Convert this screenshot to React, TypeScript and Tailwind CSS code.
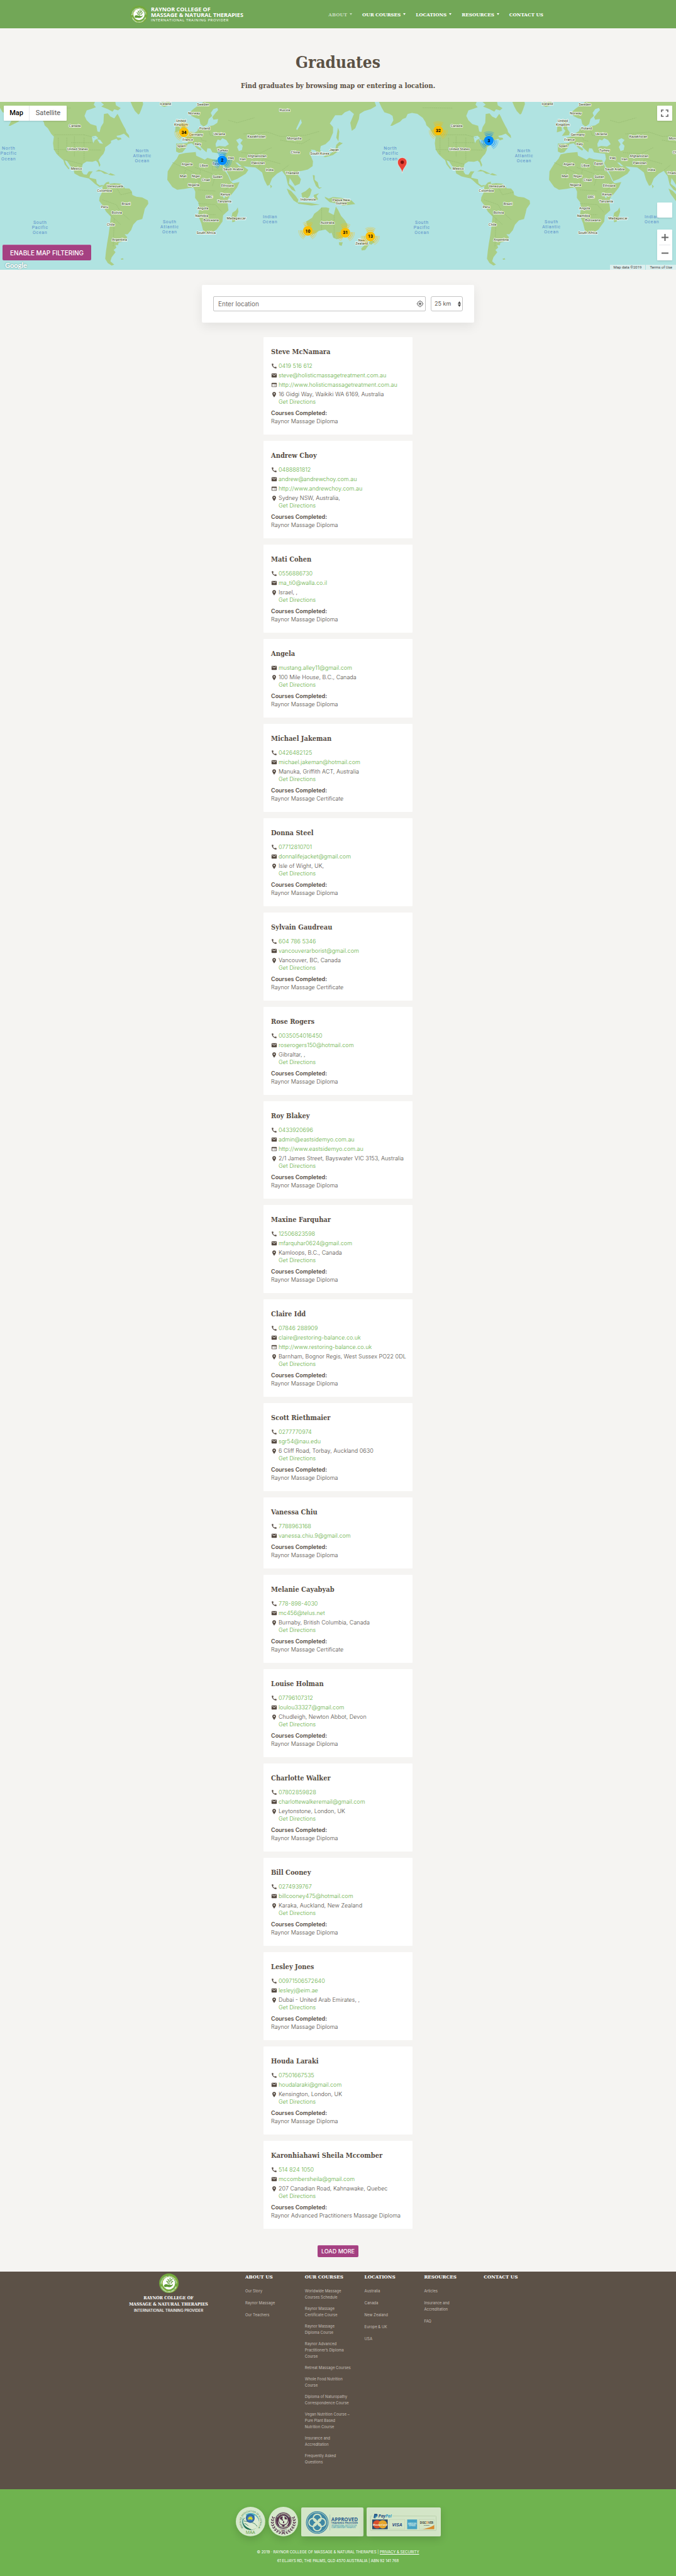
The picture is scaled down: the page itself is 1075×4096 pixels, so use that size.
import React from "react";
import { MdCall, MdEmail, MdWeb, MdLocationOn, MdMyLocation, MdFullscreen } from "react-icons/md";

type Graduate = {
  name: string;
  phone?: string;
  email: string;
  site?: string;
  address?: string;
  course?: string;
};

const graduates: Graduate[] = [
  { name: "Steve McNamara", phone: "0419 516 612", email: "steve@holisticmassagetreatment.com.au", site: "http://www.holisticmassagetreatment.com.au", address: "16 Gidgi Way, Waikiki WA 6169, Australia" },
  { name: "Andrew Choy", phone: "0488881812", email: "andrew@andrewchoy.com.au", site: "http://www.andrewchoy.com.au", address: "Sydney NSW, Australia," },
  { name: "Mati Cohen", phone: "0556886730", email: "ma_ti0@walla.co.il", address: "Israel, ," },
  { name: "Angela", email: "mustang.alley11@gmail.com", address: "100 Mile House, B.C., Canada" },
  { name: "Michael Jakeman", phone: "0426482125", email: "michael.jakeman@hotmail.com", address: "Manuka, Griffith ACT, Australia", course: "Raynor Massage Certificate" },
  { name: "Donna Steel", phone: "07712810701", email: "donnalifejacket@gmail.com", address: "Isle of Wight, UK," },
  { name: "Sylvain Gaudreau", phone: "604 786 5346", email: "vancouverarborist@gmail.com", address: "Vancouver, BC, Canada", course: "Raynor Massage Certificate" },
  { name: "Rose Rogers", phone: "0035054016450", email: "roserogers150@hotmail.com", address: "Gibraltar, ," },
  { name: "Roy Blakey", phone: "0433920696", email: "admin@eastsidemyo.com.au", site: "http://www.eastsidemyo.com.au", address: "2/1 James Street, Bayswater VIC 3153, Australia" },
  { name: "Maxine Farquhar", phone: "12506823598", email: "mfarquhar0624@gmail.com", address: "Kamloops, B.C., Canada" },
  { name: "Claire Idd", phone: "07846 288909", email: "claire@restoring-balance.co.uk", site: "http://www.restoring-balance.co.uk", address: "Barnham, Bognor Regis, West Sussex PO22 0DL" },
  { name: "Scott Riethmaier", phone: "0277770974", email: "sgr54@nau.edu", address: "6 Cliff Road, Torbay, Auckland 0630" },
  { name: "Vanessa Chiu", phone: "7788963168", email: "vanessa.chiu.9@gmail.com" },
  { name: "Melanie Cayabyab", phone: "778-898-4030", email: "mc456@telus.net", address: "Burnaby, British Columbia, Canada", course: "Raynor Massage Certificate" },
  { name: "Louise Holman", phone: "07796107312", email: "loulou33327@gmail.com", address: "Chudleigh, Newton Abbot, Devon" },
  { name: "Charlotte Walker", phone: "07802859828", email: "charlottewalkeremail@gmail.com", address: "Leytonstone, London, UK" },
  { name: "Bill Cooney", phone: "0274939767", email: "billcooney475@hotmail.com", address: "Karaka, Auckland, New Zealand" },
  { name: "Lesley Jones", phone: "00971506572640", email: "lesleyj@eim.ae", address: "Dubai - United Arab Emirates, ," },
  { name: "Houda Laraki", phone: "07501667535", email: "houdalaraki@gmail.com", address: "Kensington, London, UK" },
  { name: "Karonhiahawi Sheila Mccomber", phone: "514 824 1050", email: "mccombersheila@gmail.com", address: "207 Canadian Road, Kahnawake, Quebec", course: "Raynor Advanced Practitioners Massage Diploma" },
];

/* Width of one full turn of the globe, in the units of the outlines below. */
const WORLD = 1771;
const SX = 0.3428;
const SY = 0.1975;
const mx = (x: number) => x * SX;
const my = (y: number) => (y - 12) * SY;

const land = [
  // North and Central America
  "M-13,12 0,60 12,95 37,110 50,125 54,160 40,205 48,205 85,172 97,150 112,140 120,110 140,100 165,108 190,140 203,175 207,200 222,225 238,270 250,292 246,345 250,395 262,430 278,458 294,482 300,515 318,555 322,548 308,515 300,480 312,490 325,525 342,560 345,588 370,612 395,622 412,628 425,648 440,672 462,698 476,690 478,680 462,686 449,668 446,635 430,628 415,622 418,600 430,572 412,572 402,598 388,596 380,575 380,540 384,512 402,492 428,494 445,486 454,500 461,536 466,520 457,480 468,452 480,430 487,400 488,378 500,362 515,342 515,325 540,308 548,322 564,312 560,300 545,298 540,285 556,280 575,268 590,290 600,305 598,280 586,255 583,235 572,200 560,160 552,130 545,108 530,145 512,130 500,105 482,110 480,180 468,215 462,255 452,250 447,205 420,190 402,160 392,125 402,80 425,68 445,55 435,35 440,12Z",
  "M468,12 535,12 538,40 560,62 548,80 530,72 522,90 500,70 470,50 482,35Z",
  "M606,12 615,50 626,85 642,115 648,105 656,70 664,30 662,12Z",
  "M443,572 458,558 480,570 506,592 484,590 468,572Z M502,598 512,585 536,602 520,604Z",
  "M742,22 750,14 785,12 795,28 780,42 762,52 748,42Z",
  // South America
  "M476,690 492,662 506,654 506,672 530,666 560,670 572,690 580,708 600,710 612,735 614,762 632,775 660,782 686,806 688,832 672,872 667,910 660,955 636,966 618,1000 608,1045 592,1078 578,1078 590,1100 584,1130 550,1145 548,1165 535,1165 540,1185 527,1205 536,1222 518,1262 512,1295 530,1322 518,1330 500,1310 488,1275 492,1210 497,1150 504,1080 510,1000 514,935 492,895 478,850 460,808 462,780 472,745 475,710Z",
  "M560,1275 570,1270 573,1280 563,1283Z",
  // Africa and Madagascar
  "M830,435 860,424 908,416 910,445 935,465 950,478 962,462 985,474 1022,480 1028,500 1040,560 1058,605 1068,645 1080,668 1111,658 1100,700 1080,745 1060,785 1055,820 1060,885 1035,925 1032,975 1005,1040 985,1062 955,1070 942,1045 934,990 919,925 925,865 920,820 905,785 906,735 898,705 880,705 858,712 822,720 800,698 776,640 778,572 800,510 820,470Z",
  "M1078,905 1095,885 1103,862 1106,895 1090,975 1078,982 1074,940Z",
  // Europe and Asia
  "M817,347 850,347 872,342 868,318 856,300 880,292 900,262 915,248 920,225 936,230 960,225 968,208 990,200 1008,180 1012,150 990,155 985,135 1000,100 1012,78 1008,60 990,70 978,100 984,125 968,150 962,190 945,212 930,190 925,150 912,145 888,125 880,95 900,65 930,30 945,12 1738,12 1745,45 1720,70 1690,85 1668,110 1665,150 1648,225 1632,245 1625,180 1642,110 1622,80 1600,95 1585,120 1555,120 1530,185 1545,215 1545,260 1530,320 1510,352 1488,368 1485,395 1492,435 1478,438 1462,400 1442,395 1448,420 1440,440 1452,490 1450,530 1428,556 1400,568 1382,572 1380,595 1396,635 1390,672 1368,688 1352,645 1344,625 1340,670 1362,700 1372,735 1354,720 1336,680 1326,610 1308,568 1285,590 1262,628 1250,680 1240,688 1226,640 1216,580 1198,556 1185,540 1150,535 1120,528 1102,500 1092,500 1110,530 1128,528 1152,560 1140,590 1100,632 1074,650 1058,592 1040,535 1032,505 1040,470 1036,430 1010,425 985,418 976,388 962,385 958,418 940,390 924,362 908,345 905,358 935,392 930,405 915,388 890,345 870,352 862,385 846,418 830,422 817,412Z",
  "M852,150 838,170 846,205 842,225 852,245 836,285 868,280 872,258 862,232Z M815,205 834,205 836,245 812,258Z",
  "M1500,452 1530,432 1555,400 1560,358 1574,335 1590,345 1568,372 1568,410 1545,440 1508,458Z",
  "M1560,300 1568,220 1574,250 1570,330Z",
  "M1330,710 1350,728 1372,770 1384,800 1380,826 1362,806 1340,752Z M1380,820 1440,826 1484,840 1445,846 1384,832Z M1398,748 1418,730 1436,702 1446,720 1438,765 1428,788 1402,780Z M1455,762 1480,748 1468,770 1476,795 1462,810Z",
  "M1451,600 1460,605 1460,640 1474,660 1480,700 1494,702 1480,712 1466,690 1454,640Z M1253,676 1262,692 1256,708Z",
  "M1506,775 1525,790 1545,778 1585,785 1630,805 1648,835 1590,848 1570,832 1530,820 1510,790Z",
  // Australia and New Zealand
  "M1420,975 1448,945 1458,912 1475,890 1492,862 1512,862 1528,868 1524,900 1548,922 1558,855 1568,880 1582,930 1600,965 1612,1000 1606,1050 1590,1105 1562,1118 1546,1105 1538,1065 1530,1072 1510,1040 1480,1050 1462,1072 1430,1080 1420,1060 1428,1020Z",
  "M1572,1142 1590,1142 1585,1172 1574,1165Z",
  "M1708,1105 1722,1115 1738,1140 1722,1162 1710,1150 1716,1135Z M1700,1150 1712,1160 1694,1205 1678,1208 1676,1192Z",
];

const water = [
  "M1000,350 1010,315 1022,322 1032,305 1050,320 1062,352 1045,372 1018,366 1002,375Z",
  "M1095,320 1112,304 1126,318 1115,345 1126,365 1122,400 1108,408 1100,375 1108,352Z",
  "M1395,150 1400,180 1378,240 1374,230Z",
  "M425,290 445,285 456,305 440,320 432,345 428,310Z M450,312 465,318 478,350 462,345Z",
  "M1035,770 1042,765 1044,785 1036,785Z",
];

const borders =
  "M253,277H390 M190,60 228,60 330,62 M390,277 440,300 M300,480 330,490 382,515 M330,340H430 M270,300V440 M310,300V420 M345,290V450 M390,300V480 M250,395 470,400 M530,670 560,760 610,740 M475,800 540,840 560,900 600,960 M510,920 560,1000 M530,950 525,1180 M800,500 850,540 920,600 M905,540 985,590 M985,480V560H1040 M860,560 850,640 M930,560 920,680 M1000,600 985,690 M920,720 1000,730 M920,830 1000,840 1030,900 M945,920H1000 M1060,700 1030,740 M880,290 905,345 M925,230 935,320 960,330 M965,220 975,280 1020,290 M1130,270 1240,255 1300,290 1420,280 1480,250 M1120,420 1200,430 1260,380 M1200,540 1220,470 1300,510 M1310,560 1340,520 M1300,320 1400,350 1440,310 M1060,160 1100,180 1180,140 M1492,865V1045 M1550,925V1110";

const countries: [string, number, number][] = [
  ["Canada", 347, 202], ["United States", 360, 391], ["Mexico", 355, 550], ["Venezuela", 534, 691],
  ["Colombia", 485, 727], ["Brazil", 585, 831], ["Peru", 485, 856], ["Bolivia", 542, 904], ["Chile", 514, 997],
  ["Argentina", 554, 1123], ["Iceland", 768, 25], ["Sweden", 942, 34], ["Norway", 900, 101], ["United", 840, 166],
  ["Kingdom", 840, 193], ["Poland", 950, 226], ["Germany", 909, 275], ["Ukraine", 1018, 271], ["France", 871, 317],
  ["Italy", 918, 350], ["Spain", 842, 368], ["Turkey", 1033, 401], ["Russia", 1321, 80], ["Kazakhstan", 1190, 289],
  ["Mongolia", 1365, 308], ["China", 1370, 415], ["South Korea", 1483, 428], ["Japan", 1550, 398], ["Iraq", 1071, 461],
  ["Iran", 1126, 475], ["Afghanistan", 1193, 449], ["Pakistan", 1197, 502], ["India", 1251, 559], ["Thailand", 1356, 586],
  ["Algeria", 868, 511], ["Libya", 945, 521], ["Egypt", 1006, 509], ["Saudi Arabia", 1081, 553], ["Mali", 850, 607],
  ["Niger", 909, 608], ["Chad", 955, 640], ["Sudan", 1009, 613], ["Nigeria", 899, 680], ["Ethiopia", 1055, 686],
  ["DRC", 971, 775], ["Kenya", 1045, 758], ["Tanzania", 1041, 814], ["Angola", 941, 869], ["Namibia", 936, 928],
  ["Botswana", 979, 964], ["Madagascar", 1096, 947], ["South Africa", 956, 1063], ["Indonesia", 1429, 796],
  ["Papua New", 1583, 802], ["Guinea", 1583, 827], ["Australia", 1519, 982], ["New", 1678, 1124], ["Zealand", 1678, 1151],
];

const oceans: [string[], number, number][] = [
  [["North", "Pacific", "Ocean"], 40, 386], [["North", "Atlantic", "Ocean"], 660, 404],
  [["South", "Pacific", "Ocean"], 186, 983], [["South", "Atlantic", "Ocean"], 787, 976],
  [["Indian", "Ocean"], 1253, 935],
];

const clusters: [number, number, number, string][] = [
  [34, 853, 256, "#ffbf00"], [2, 1031, 482, "#008cff"], [10, 1428, 1050, "#ffbf00"], [32, 2033, 243, "#ffbf00"],
  [3, 2268, 324, "#008cff"], [31, 1602, 1065, "#ffbf00"], [13, 1718, 1095, "#ffbf00"],
];

function Cluster({ n, x, y, color }: { n: number; x: number; y: number; color: string }) {
  return (
    <g transform={`translate(${mx(x)} ${my(y)})`}>
      {[0, 120, 240].map((a) => (
        <g key={a} transform={`rotate(${a})`} fill="none" stroke={color} strokeWidth="1.4">
          <path d="M-5.4,-7.7 A9.4,9.4 0 0 1 5.4,-7.7" opacity=".75" />
          <path d="M-6.7,-9.8 A11.9,11.9 0 0 1 6.7,-9.8" opacity=".5" />
          <path d="M-8,-12 A14.4,14.4 0 0 1 8,-12" opacity=".3" />
        </g>
      ))}
      <circle r="7.7" fill={color} />
      <text y="2.5" textAnchor="middle" fontSize="7" fontWeight="700" fill="#000">{n}</text>
    </g>
  );
}

function WorldMap() {
  return (
    <svg viewBox="0 0 1075 267" preserveAspectRatio="xMidYMid slice" className="block h-full w-full font-['Roboto',sans-serif]" role="img" aria-label="Map of graduates">
      <defs>
        <g id="world">
          {land.map((d) => <path key={d} d={d} fill="#aace85" />)}
          {water.map((d) => <path key={d} d={d} fill="#b0e3e1" />)}
          <path d={borders} fill="none" stroke="#8fb56c" strokeWidth="1" vectorEffect="non-scaling-stroke" strokeDasharray="2 1" opacity=".55" />
        </g>
      </defs>
      <rect width="1075" height="267" fill="#b0e3e1" />
      <g transform={`scale(${SX} ${SY}) translate(0 -12)`}>
        <use href="#world" x={-WORLD} />
        <use href="#world" />
        <use href="#world" x={WORLD} />
      </g>
      {[0, WORLD].map((o) => (
        <g key={o} textAnchor="middle">
          {oceans.map(([lines, x, y]) =>
            lines.map((l, i) => (
              <text key={l + x} x={mx(x + o)} y={my(y + i * 41) + 2.5} fontSize="7" letterSpacing=".7" fill="#5a8fc9">{l}</text>
            ))
          )}
          {countries.filter(([, x]) => x + o < 3180).map(([c, x, y]) => (
            <text key={c} x={mx(x + o)} y={my(y) + 2} fontSize="5.5" fontWeight="500" fill="#4b5a33" stroke="#fff" strokeWidth="1.6" strokeLinejoin="round" paintOrder="stroke">{c}</text>
          ))}
        </g>
      ))}
      {clusters.map(([n, x, y, c]) => <Cluster key={n} n={n} x={x} y={y} color={c} />)}
      <g transform={`translate(${mx(1866)} ${my(585)})`}>
        <path d="M0,0 C-.8,-8 -7.3,-11 -7.3,-17.2 A7.3,7.3 0 0 1 7.3,-17.2 C7.3,-11 .8,-8 0,0Z" fill="#ea4335" stroke="#fff" strokeWidth=".5" />
        <circle cy="-17.2" r="2.7" fill="#811411" />
      </g>
    </svg>
  );
}

function Seal({ className, id }: { className: string; id: string }) {
  return (
    <svg viewBox="0 0 160 160" className={className} aria-hidden="true">
      <defs>
        <path id={`${id}t`} d="M22,86 A58,58 0 1 1 138,86" />
        <path id={`${id}b`} d="M13,88 A67,67 0 0 0 147,88" />
      </defs>
      <circle cx="80" cy="80" r="80" fill="#74aa3e" />
      <circle cx="80" cy="80" r="51" fill="#fff" />
      <g fill="#fff" fontSize="15" fontWeight="700" textAnchor="middle" className="font-['Open_Sans',sans-serif]">
        <text fontSize="13"><textPath href={`#${id}t`} startOffset="50%">INTERNATIONAL MASSAGE SCHOOL</textPath></text>
        <text fontSize="12"><textPath href={`#${id}b`} startOffset="50%">CHANGING LIVES SINCE 1986</textPath></text>
      </g>
      <g fill="#5d9a34">
        <path d="M40,96 C50,84 64,86 76,92 L96,92 C100,96 94,99 82,99 C92,101 100,96 112,88 C116,88 114,94 108,100 C98,112 84,114 66,110 L44,112Z" />
        <path d="M80,90 C78,76 80,66 88,50 L91,52 C85,66 84,78 86,90Z" />
        <ellipse cx="90" cy="44" rx="4" ry="9" />
        <ellipse cx="75" cy="52" rx="4" ry="9" transform="rotate(-30 75 52)" />
        <ellipse cx="104" cy="50" rx="4" ry="9" transform="rotate(40 104 50)" />
        <ellipse cx="66" cy="66" rx="4" ry="9" transform="rotate(-60 66 66)" />
        <ellipse cx="108" cy="66" rx="4" ry="9" transform="rotate(70 108 66)" />
        <ellipse cx="72" cy="78" rx="4" ry="8" transform="rotate(-70 72 78)" />
        <ellipse cx="99" cy="77" rx="4" ry="8" transform="rotate(80 99 77)" />
        <ellipse cx="95" cy="60" rx="4" ry="8" transform="rotate(20 95 60)" />
        <ellipse cx="80" cy="64" rx="3" ry="7" transform="rotate(-20 80 64)" />
      </g>
    </svg>
  );
}

function Header() {
  const items = ["About", "Our Courses", "Locations", "Resources"];
  return (
    <header className="bg-[#72a757]">
      <div className="mx-auto flex h-[45px] max-w-[661px] items-center justify-between pr-1">
        <a href="#" className="flex items-center gap-[5px] text-white">
          <Seal className="h-7 w-7" id="top" />
          <span className="flex flex-col font-['Open_Sans',sans-serif] text-[9px] leading-[9px] font-bold whitespace-nowrap">
            <span>RAYNOR COLLEGE OF</span>
            <span>MASSAGE &amp; NATURAL THERAPIES</span>
            <span className="text-[6px] leading-[8px] font-normal tracking-widest">INTERNATIONAL TRAINING PROVIDER</span>
          </span>
        </a>
        <nav className="flex gap-4 font-['DejaVu_Serif_Condensed','DejaVu_Serif',serif] text-[8px] font-bold text-white uppercase">
          {items.map((t, i) => (
            <a key={t} href="#" className={i === 0 ? "flex items-center gap-1 text-white/60" : "flex items-center gap-1"}>
              {t}
              <svg viewBox="0 0 4 3" className="h-[3px] w-1" fill="currentColor" aria-hidden="true"><path d="M0 0h4L2 3z" /></svg>
            </a>
          ))}
          <a href="#">Contact Us</a>
        </nav>
      </div>
    </header>
  );
}

function MapSection() {
  return (
    <section className="relative h-[267px] overflow-hidden font-['Roboto',sans-serif]">
      <WorldMap />
      <div className="absolute top-1.5 left-1.5 flex h-6 rounded-[1px] bg-white text-[11px] shadow-sm">
        <button className="w-[41px] border-r border-gray-200 font-medium text-black">Map</button>
        <button className="w-[59px] text-[#565656]">Satellite</button>
      </div>
      <button aria-label="Full screen" className="absolute top-1.5 right-1.5 flex h-6 w-6 items-center justify-center rounded-[1px] bg-white text-[#666] shadow-sm">
        <MdFullscreen size={20} />
      </button>
      <div className="absolute right-1.5 bottom-[15px] flex flex-col gap-[19px]">
        <div className="h-6 w-6 rounded-[1px] bg-white shadow-sm" />
        <div className="flex w-6 flex-col rounded-[1px] bg-white text-[#666] shadow-sm">
          <button aria-label="Zoom in" className="flex h-6 items-center justify-center">
            <svg viewBox="0 0 11 11" className="h-[11px] w-[11px]" fill="currentColor"><path d="M4.500 0h2v4.500H11v2H6.500V11h-2V6.500H0v-2h4.500z" /></svg>
          </button>
          <span className="mx-[3px] h-px bg-gray-200" />
          <button aria-label="Zoom out" className="flex h-6 items-center justify-center">
            <svg viewBox="0 0 11 11" className="h-[11px] w-[11px]" fill="currentColor"><path d="M0 4.500h11v2H0z" /></svg>
          </button>
        </div>
      </div>
      <div className="absolute bottom-0 left-1 flex flex-col items-start">
        <button className="h-[25px] rounded-[2px] border-t border-[#b85c99] bg-[#a54182] px-3 font-['Inter',sans-serif] text-[10px] font-medium whitespace-nowrap text-white">ENABLE MAP FILTERING</button>
        <span className="pl-1 font-['Lato',sans-serif] text-[11px] leading-[15px] font-bold text-white [text-shadow:0_0_2px_#5b8a88]">Google</span>
      </div>
      <div className="absolute right-0 bottom-0 flex h-2 bg-[#dcefee] text-[6px] leading-[8px] text-[#444]">
        <span className="border-r border-[#b0e3e1] px-1.5">Map data ©2019</span>
        <a href="#" className="px-1.5">Terms of Use</a>
      </div>
    </section>
  );
}

function SearchBar() {
  return (
    <form className="mx-auto mt-6 flex h-[60px] w-full max-w-[433px] items-center gap-2 rounded-[2px] bg-white px-[18px] text-[9px] text-[#5c5650] shadow-[0_6px_18px_rgba(0,0,0,0.08)]">
      <div className="flex h-6 flex-1 items-center rounded-[2px] border border-[#c4c4c4] pr-0.5 pl-[7px]">
        <input aria-label="Enter location" placeholder="Enter location" className="min-w-0 flex-1 text-[10px] outline-none placeholder:text-[#6f6b67]" />
        <button type="button" aria-label="Use my location"><MdMyLocation size={12} color="#777" /></button>
      </div>
      <div className="flex h-6 w-[51px] items-center rounded-[3px] border border-[#c4c4c4] pr-0.5 pl-[5px]">
        <select aria-label="Distance" className="min-w-0 flex-1 appearance-none bg-transparent text-[9px] outline-none">
          <option>25 km</option>
        </select>
        <svg viewBox="0 0 5 9" className="h-[9px] w-[5px]" fill="#444" aria-hidden="true"><path d="M0 4 2.500 0 5 4zM0 5h5L2.500 9z" /></svg>
      </div>
    </form>
  );
}

function Row({ icon, children }: { icon: React.ReactNode; children: React.ReactNode }) {
  return (
    <div className="flex gap-0.5">
      <span className="flex h-3 w-2.5 shrink-0 items-center justify-center text-[#564b42]">{icon}</span>
      <div className="flex flex-col whitespace-nowrap">{children}</div>
    </div>
  );
}

function Card({ g }: { g: Graduate }) {
  return (
    <article className="rounded-[1px] bg-white px-3 pt-4 pb-[15px] text-[9px] leading-[12px] font-light text-[#4f4a44]">
      <h2 className="mb-2 font-['DejaVu_Serif_Condensed','DejaVu_Serif',serif] text-[11px] leading-[16px] font-bold whitespace-nowrap text-[#564d44]">{g.name}</h2>
      <div className="flex flex-col gap-[3px] text-[#5fae3e]">
        {g.phone && <Row icon={<MdCall size={10} />}><a href="#">{g.phone}</a></Row>}
        <Row icon={<MdEmail size={10} />}><a href="#">{g.email}</a></Row>
        {g.site && <Row icon={<MdWeb size={10} />}><a href="#">{g.site}</a></Row>}
        {g.address && (
          <Row icon={<MdLocationOn size={11} />}>
            <span className="text-[#4f4a44]">{g.address}</span>
            <a href="#">Get Directions</a>
          </Row>
        )}
      </div>
      <div className="mt-[5px] leading-[13px]">
        <h3 className="font-semibold text-[#564d44]">Courses Completed:</h3>
        <p className="whitespace-nowrap">{g.course ?? "Raynor Massage Diploma"}</p>
      </div>
    </article>
  );
}

const footerColumns: { title: string; links: string[]; list: string }[] = [
  { title: "About Us", links: ["Our Story", "Raynor Massage", "Our Teachers"], list: "gap-[9px]" },
  {
    title: "Our Courses",
    links: [
      "Worldwide Massage\nCourses Schedule",
      "Raynor Massage\nCertificate Course",
      "Raynor Massage\nDiploma Course",
      "Raynor Advanced\nPractitioner’s Diploma\nCourse",
      "Retreat Massage Courses",
      "Whole Food Nutrition\nCourse",
      "Diploma of Naturopathy\nCorrespondence Course",
      "Vegan Nutrition Course –\nPure Plant Based\nNutrition Course",
      "Insurance and\nAccreditation",
      "Frequently Asked\nQuestions",
    ],
    list: "gap-2",
  },
  { title: "Locations", links: ["Australia", "Canada", "New Zealand", "Europe & UK", "USA"], list: "gap-[9px]" },
  { title: "Resources", links: ["Articles", "Insurance and\nAccreditation", "FAQ"], list: "gap-[9px]" },
  { title: "Contact Us", links: [], list: "gap-[9px]" },
];

function Footer() {
  return (
    <footer className="bg-[#5c5147] pb-[38px]">
      <div className="mx-auto flex max-w-[663px] pr-[5px]">
        <div className="flex w-[184px] shrink-0 flex-col pt-[3px]">
          <div className="flex w-[124px] flex-col items-center font-['DejaVu_Serif_Condensed','DejaVu_Serif',serif] text-[7px] leading-[10px] font-bold whitespace-nowrap text-white">
            <Seal className="mb-[3px] h-[31px] w-[31px]" id="foot" />
            <span>RAYNOR COLLEGE OF</span>
            <span>MASSAGE &amp; NATURAL THERAPIES</span>
            <span className="font-['Inter',sans-serif] text-[6px] leading-[9px] font-medium">INTERNATIONAL TRAINING PROVIDER</span>
          </div>
        </div>
        <div className="grid flex-1 grid-cols-5 pt-[3px]">
          {footerColumns.map((c) => (
            <div key={c.title} className="min-w-0">
              <h4 className="mb-[13px] font-['DejaVu_Serif_Condensed','DejaVu_Serif',serif] text-[8px] leading-[10px] font-bold whitespace-nowrap text-white uppercase">{c.title}</h4>
              <ul className={"flex flex-col text-[6px] leading-[10px] whitespace-pre-line text-[#c4beb6] " + c.list}>
                {c.links.map((l) => <li key={l}><a href="#">{l}</a></li>)}
              </ul>
            </div>
          ))}
        </div>
      </div>
    </footer>
  );
}

function AssociationBadge() {
  return (
    <svg viewBox="24 39 237 237" className="h-[47px] w-[47px]" role="img" aria-label="Massage Association of Australia">
      <defs>
        <path id="maaArc" d="M86,210 A77,77 0 1 1 199,210" />
        <linearGradient id="maaRing" x1="0" y1="0" x2="0" y2="1"><stop offset="0" stopColor="#52b2c4" /><stop offset="1" stopColor="#1f6b4d" /></linearGradient>
      </defs>
      <circle cx="142" cy="157" r="118" fill="#d6e8cc" />
      <circle cx="143" cy="156" r="68" fill="url(#maaRing)" />
      <path d="M82,140 C84,112 96,100 108,102 C104,120 108,150 124,158 C146,164 164,158 170,132 L176,104 C200,122 214,148 210,172 C204,200 180,220 150,222 C120,206 92,196 82,160Z" fill="#dcebd2" />
      <path d="M86,152 C110,158 128,156 150,164 C170,168 188,182 194,196 M94,172 C104,176 116,182 124,192 M84,145 C88,136 92,130 98,128" fill="none" stroke="#1f6b4d" strokeWidth="4" />
      <path d="M90,196 C106,200 120,214 148,218 C130,226 104,218 90,196Z" fill="#1f6b4d" />
      <circle cx="140" cy="132" r="35" fill="#2c5f9f" />
      <circle cx="140" cy="132" r="27" fill="#3f79b4" />
      <path d="M122,128 132,120 140,116 144,122 148,115 154,126 160,134 152,145 144,140 134,140 124,144Z" fill="#d8d92d" />
      <text fontSize="18" fill="#3a7a49" textAnchor="middle" className="font-['Inter',sans-serif]"><textPath href="#maaArc" startOffset="50%">MASSAGE ASSOCIATION OF AUSTRALIA</textPath></text>
      <text x="141" y="258" fontSize="35" fontWeight="500" fill="#5b983d" textAnchor="middle" className="font-['Open_Sans',sans-serif]">MAA</text>
    </svg>
  );
}

function WorldMassageBadge() {
  const leaves = Array.from({ length: 9 }, (_, i) => 5 + i * 13.5);
  return (
    <svg viewBox="285 39 237 237" className="h-[47px] w-[47px]" role="img" aria-label="World Massage Foundation">
      <defs>
        <path id="wmfT" d="M354,150 A50,50 0 0 1 454,150" />
        <path id="wmfB" d="M346,150 A58,58 0 0 0 462,150" />
      </defs>
      <circle cx="404" cy="157" r="118" fill="#d6e8cc" />
      <g fill="#54304a">
        {leaves.map((a) => (
          <g key={a}>
            <g transform={`rotate(${a + 62} 404 160)`}><ellipse cx="404" cy="66" rx="9" ry="4" transform="rotate(35 404 66)" /><ellipse cx="404" cy="78" rx="9" ry="4" transform="rotate(-35 404 78)" /></g>
            <g transform={`rotate(${-a - 62} 404 160)`}><ellipse cx="404" cy="66" rx="9" ry="4" transform="rotate(-35 404 66)" /><ellipse cx="404" cy="78" rx="9" ry="4" transform="rotate(35 404 78)" /></g>
          </g>
        ))}
        <circle cx="404" cy="150" r="68" stroke="#d6e8cc" strokeWidth="4" />
        <circle cx="404" cy="150" r="60" fill="none" stroke="#d6e8cc" strokeWidth="2" />
      </g>
      <g fill="#d6e8cc" fontSize="12" fontWeight="700" textAnchor="middle" className="font-['Inter',sans-serif]">
        <text><textPath href="#wmfT" startOffset="50%">WORLD MASSAGE</textPath></text>
        <text><textPath href="#wmfB" startOffset="50%">FOUNDATION</textPath></text>
      </g>
      <circle cx="404" cy="146" r="36" fill="#d6e8cc" />
      <path d="M376,128 C386,114 398,114 400,120 C396,132 394,140 404,146 C398,154 392,150 390,142 C382,142 376,138 376,128Z M412,116 C424,118 434,130 436,142 L426,138 C420,144 412,136 414,128Z M402,152 412,158 408,174 400,166Z" fill="#54304a" />
      <path d="M362,146 C366,176 386,180 400,196 L384,196 C370,188 358,172 362,146Z M446,146 C442,176 422,180 408,196 L424,196 C438,188 450,172 446,146Z" fill="#d6e8cc" />
      <rect x="374" y="222" width="60" height="18" rx="4" fill="#d6e8cc" stroke="#54304a" strokeWidth="2" />
      <text x="404" y="236" fontSize="12" fontWeight="700" fill="#54304a" textAnchor="middle">WMF</text>
    </svg>
  );
}

function ProviderBadge() {
  return (
    <svg viewBox="546 42 501 231" className="h-[46px] w-[99px] rounded-[2px] bg-[#d3e5c7]" role="img" aria-label="Approved training provider">
      <circle cx="675" cy="162" r="91" fill="#3e87a3" />
      <circle cx="675" cy="162" r="83" fill="none" stroke="#d3e5c7" strokeWidth="4" />
      <g fill="none" stroke="#d3e5c7" strokeWidth="10">
        <circle cx="675" cy="127" r="32" />
        <circle cx="675" cy="197" r="32" />
        <circle cx="640" cy="162" r="32" />
        <circle cx="710" cy="162" r="32" />
        <path d="M650,137 700,187 M700,137 650,187" strokeWidth="7" />
      </g>
      <path d="M777,98V226" stroke="#8db7b0" strokeWidth="3" />
      <g className="font-['Open_Sans',sans-serif]" fontWeight="700">
        <text x="788" y="151" fontSize="40" fill="#2c5f8e">APPROVED</text>
        <text x="788" y="174" fontSize="21" fill="#2c5f8e">TRAINING PROVIDER</text>
        <text x="788" y="191" fontSize="13" fill="#5aa7b4">INTERNATIONAL INSTITUTE FOR</text>
        <text x="788" y="206" fontSize="13" fill="#5aa7b4">COMPLEMENTARY THERAPISTS</text>
      </g>
    </svg>
  );
}

function PaymentBadge() {
  return (
    <svg viewBox="1070 42 598 231" className="h-[46px] w-[118px] rounded-[2px] bg-[#d3e5c7]" role="img" aria-label="Accepted payment methods">
      <rect x="1101" y="110" width="529" height="117" rx="4" fill="none" stroke="#b4cba8" strokeWidth="4" />
      <rect x="1116" y="88" width="160" height="42" fill="#d3e5c7" />
      <path d="M1132,93 H1150 C1164,94 1160,116 1142,116 L1138,126 H1126Z" fill="#1f4b7c" />
      <path d="M1136,102 H1154 C1164,106 1156,120 1146,120 L1142,130 H1132Z" fill="#2f86b4" opacity=".7" />
      <g className="font-['Open_Sans',sans-serif]" fontWeight="700" textAnchor="middle">
        <text x="1218" y="123" fontSize="33" fontStyle="italic" fill="#1f4b7c">Pay<tspan fill="#3098c2">Pal</tspan></text>
        <rect x="1115" y="138" width="125" height="78" fill="#2b4a6c" />
        <circle cx="1155" cy="177" r="34" fill="#d8502e" />
        <circle cx="1200" cy="177" r="34" fill="#e5a52c" />
        <text x="1178" y="186" fontSize="21" fontStyle="italic" fill="#f3f3e6">MasterCard</text>
        <rect x="1256" y="138" width="122" height="78" fill="none" stroke="#bcd0b0" strokeWidth="3" />
        <text x="1316" y="192" fontSize="39" fontStyle="italic" fill="#2e4f83">VISA</text>
        <rect x="1397" y="138" width="80" height="78" fill="#46a3c4" />
        <text x="1437" y="176" fontSize="13" fill="#cfe8e4">AMERICAN</text>
        <text x="1437" y="192" fontSize="13" fill="#cfe8e4">EXPRESS</text>
        <rect x="1493" y="138" width="122" height="78" fill="none" stroke="#bcd0b0" strokeWidth="3" />
        <path d="M1520,216 C1560,210 1600,196 1615,182 V216Z" fill="#d98a2b" />
        <text x="1554" y="175" fontSize="22" fill="#3c3c38">DISC<tspan fill="#e0872a">O</tspan>VER</text>
        <text x="1554" y="187" fontSize="9" fill="#3c3c38">NETWORK</text>
      </g>
    </svg>
  );
}

export default function App() {
  return (
    <div className="bg-[#f5f4f2] font-['Inter',sans-serif] text-[#5b5145]">
      <Header />
      <div className="flex flex-col items-center pt-9 pb-[17px] text-center font-['DejaVu_Serif_Condensed','DejaVu_Serif',serif] font-bold text-[#5b5145]">
        <h1 className="text-[26px] leading-[36px]">Graduates</h1>
        <p className="mt-3 text-[11px] leading-[16px]">Find graduates by browsing map or entering a location.</p>
      </div>
      <MapSection />
      <SearchBar />
      <main className="mx-auto mt-[23px] flex w-full max-w-[237px] flex-col gap-2.5">
        {graduates.map((g) => <Card key={g.name} g={g} />)}
      </main>
      <div className="flex justify-center pt-[26px] pb-[23px]">
        <button className="h-[19px] rounded-[2px] border-t border-[#b85c99] bg-[#a54182] px-1.5 text-[9px] font-medium whitespace-nowrap text-white">LOAD MORE</button>
      </div>
      <Footer />
      <div className="bg-[#6fb34f] pt-7 pb-[17px] text-center text-[6px] leading-[14px] text-white">
        <div className="mb-[18px] flex items-center justify-center gap-[5px]">
          <div className="rounded-full shadow-[0_5px_12px_rgba(0,0,0,0.14)]"><AssociationBadge /></div>
          <div className="rounded-full shadow-[0_5px_12px_rgba(0,0,0,0.14)]"><WorldMassageBadge /></div>
          <div className="shadow-[0_5px_12px_rgba(0,0,0,0.14)]"><ProviderBadge /></div>
          <div className="shadow-[0_5px_12px_rgba(0,0,0,0.14)]"><PaymentBadge /></div>
        </div>
        <p>© 2019 · RAYNOR COLLEGE OF MASSAGE &amp; NATURAL THERAPIES | <a href="#" className="underline">PRIVACY &amp; SECURITY</a></p>
        <p>61 ELJAYS RD, THE PALMS, QLD 4570 AUSTRALIA | ABN 92 141 768</p>
      </div>
    </div>
  );
}
